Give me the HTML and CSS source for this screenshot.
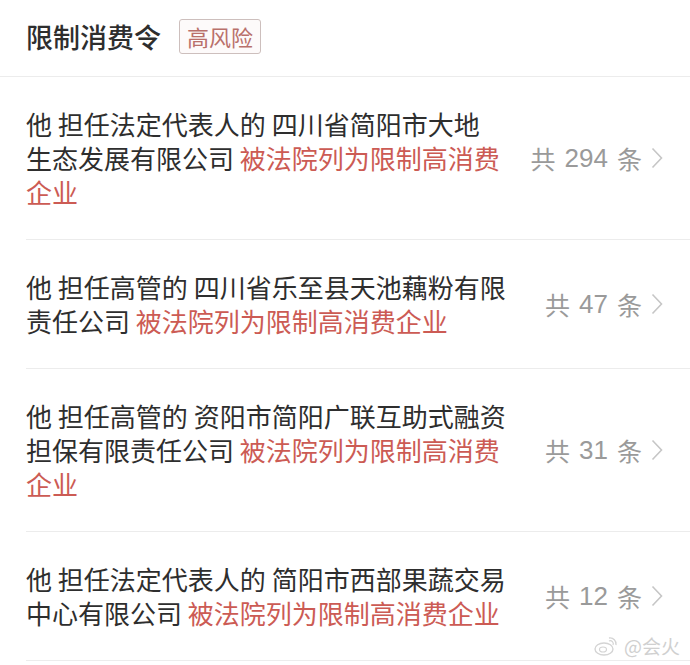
FILE: index.html
```html
<!DOCTYPE html>
<html lang="zh-CN">
<head>
<meta charset="utf-8">
<title>限制消费令</title>
<link rel="stylesheet" href="styles.css">
</head>
<body>
<div class="page">
  <header class="head">
    <h1 class="title">限制消费令</h1>
    <span class="badge">高风险</span>
  </header>
  <ul class="list">
    <li class="item">
      <p class="desc">他 担任法定代表人的 四川省简阳市大地<br>生态发展有限公司 <span class="warn">被法院列为限制高消费<br>企业</span></p>
      <div class="count"><span>共</span><span class="num">294</span><span>条</span><svg class="chev" viewBox="0 0 12 22" width="12" height="22"><path d="M1.5 1.5 L10.5 11 L1.5 20.5" fill="none" stroke="#c6c6c6" stroke-width="1.6"/></svg></div>
    </li>
    <li class="item">
      <p class="desc">他 担任高管的 四川省乐至县天池藕粉有限<br>责任公司 <span class="warn">被法院列为限制高消费企业</span></p>
      <div class="count"><span>共</span><span class="num">47</span><span>条</span><svg class="chev" viewBox="0 0 12 22" width="12" height="22"><path d="M1.5 1.5 L10.5 11 L1.5 20.5" fill="none" stroke="#c6c6c6" stroke-width="1.6"/></svg></div>
    </li>
    <li class="item">
      <p class="desc">他 担任高管的 资阳市简阳广联互助式融资<br>担保有限责任公司 <span class="warn">被法院列为限制高消费<br>企业</span></p>
      <div class="count"><span>共</span><span class="num">31</span><span>条</span><svg class="chev" viewBox="0 0 12 22" width="12" height="22"><path d="M1.5 1.5 L10.5 11 L1.5 20.5" fill="none" stroke="#c6c6c6" stroke-width="1.6"/></svg></div>
    </li>
    <li class="item">
      <p class="desc">他 担任法定代表人的 简阳市西部果蔬交易<br>中心有限公司 <span class="warn">被法院列为限制高消费企业</span></p>
      <div class="count"><span>共</span><span class="num">12</span><span>条</span><svg class="chev" viewBox="0 0 12 22" width="12" height="22"><path d="M1.5 1.5 L10.5 11 L1.5 20.5" fill="none" stroke="#c6c6c6" stroke-width="1.6"/></svg></div>
    </li>
  </ul>
  <div class="mark">
    <svg viewBox="0 0 24 20" width="24" height="20"><ellipse cx="10" cy="13" rx="9" ry="6" fill="none" stroke="#d4d4d4" stroke-width="1.4"/><ellipse cx="9" cy="13.5" rx="3.5" ry="2.5" fill="none" stroke="#d4d4d4" stroke-width="1.2"/><path d="M15 2 a6 6 0 0 1 7 7" fill="none" stroke="#d4d4d4" stroke-width="1.4"/><path d="M15 5 a3 3 0 0 1 4 4" fill="none" stroke="#d4d4d4" stroke-width="1.2"/></svg>
    <span>@会火</span>
  </div>
</div>
</body>
</html>
```
FILE: styles.css
```css
* { box-sizing: border-box; }
html, body { margin: 0; padding: 0; background: #fff; }
body {
  font-family: "Noto Sans CJK SC", "Noto Sans", sans-serif;
  color: #2e2e2e;
}
.page {
  position: relative;
  width: 690px;
  height: 665px;
  overflow: hidden;
}
.head {
  display: flex;
  align-items: center;
  height: 77px;
  padding: 0 0 4px 26px;
  border-bottom: 1px solid #ececec;
}
.title {
  margin: 0;
  font-size: 27px;
  font-weight: 500;
  letter-spacing: 0;
  color: #2e2e2e;
  line-height: 1;
}
.badge {
  margin-left: 18px;
  height: 35px;
  padding: 0 7px;
  display: flex;
  align-items: center;
  border: 1px solid #cdbfbd;
  border-radius: 3px;
  background: #fdfafa;
  color: #b9706b;
  font-size: 22px;
  line-height: 1;
}
.list {
  list-style: none;
  margin: 0;
  padding: 0 0 0 26px;
}
.item {
  display: flex;
  align-items: center;
  justify-content: space-between;
  padding: 30px 27px 30px 0;
  border-bottom: 1px solid #ececec;
}
.desc {
  margin: 0;
  font-size: 26px;
  line-height: 34px;
  color: #2e2e2e;
}
.warn { color: #cc5b54; }
.count {
  display: flex;
  align-items: center;
  gap: 9px;
  font-size: 25px;
  color: #9a9a9a;
  line-height: 1;
}
.num { font-family: "Liberation Sans", "Noto Sans", sans-serif; font-size: 26px; }
.chev { display: block; margin-left: 0; }
.mark {
  position: absolute;
  right: 10px;
  bottom: 6px;
  display: flex;
  align-items: center;
  gap: 6px;
  color: #d0d0d0;
  font-size: 19px;
}
```
